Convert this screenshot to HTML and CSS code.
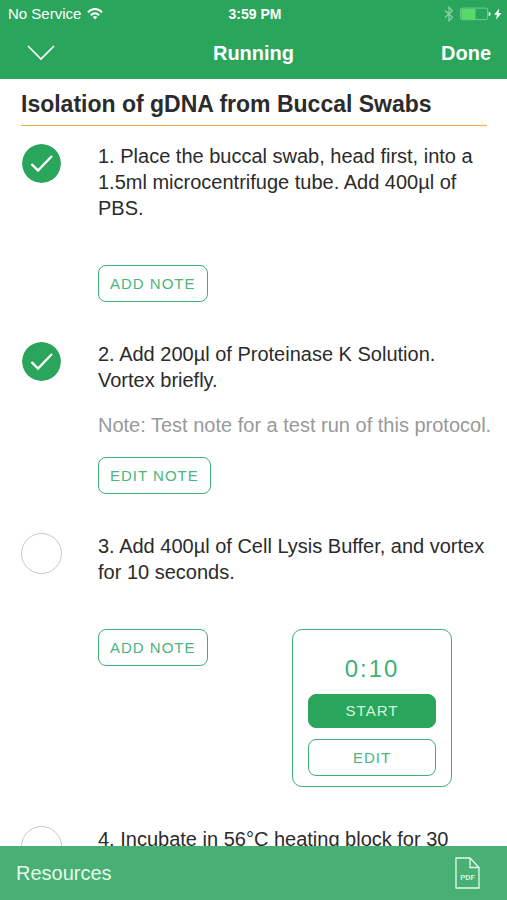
FILE: index.html
```html
<!DOCTYPE html>
<html lang="en">
<head>
<meta charset="utf-8">
<meta name="viewport" content="width=device-width, initial-scale=1">
<title>Running</title>
<link rel="stylesheet" href="styles.css">
</head>
<body>
<header class="header">
  <div class="status">
    <div class="status-left">
      <span>No Service</span>
      <svg width="16" height="12" viewBox="0 0 16 12" fill="none" stroke="#fff" stroke-width="2" aria-hidden="true">
        <path d="M1 4.400C5-.1 11-.1 15 4.400"/><path d="M3.800 7.200C6.300 4.500 9.700 4.500 12.200 7.200"/><path d="M8 11.500 5.700 9.100Q8 7 10.300 9.100Z" fill="#fff" stroke="none"/>
      </svg>
    </div>
    <span class="clock">3:59 PM</span>
    <div class="status-right">
      <svg width="10" height="16" viewBox="0 0 10 16" fill="none" stroke="#8fd0a9" stroke-width="1.200" aria-hidden="true">
        <path d="M1 4.500 8.500 11.200 5 14.800V1.200L8.500 4.800 1 11.500"/>
      </svg>
      <svg width="42" height="14" viewBox="0 0 42 14" aria-hidden="true">
        <rect x=".6" y="1.100" width="27" height="11.600" rx="1.800" fill="none" stroke="#7cc99b"/>
        <path d="M1.500 2H15.500V12H1.500Z" fill="#55dc68"/>
        <path d="M28.700 5Q30.600 5.200 30.600 7T28.700 9Z" fill="#fff"/>
        <path d="M39.200 1.500 34.200 7.800H37L35.900 12.700 41.500 6H38.500Z" fill="#fff"/>
      </svg>
    </div>
  </div>
  <nav class="nav">
    <button class="nav-collapse" type="button" aria-label="Collapse">
      <svg width="28" height="16" viewBox="0 0 28 16" fill="none" stroke="#fff" stroke-width="1.700"><path d="M1 1 14 14 27 1"/></svg>
    </button>
    <span class="nav-title">Running</span>
    <button class="nav-done" type="button">Done</button>
  </nav>
</header>

<main class="protocol">
  <h1 class="title">Isolation of gDNA from Buccal Swabs</h1>
  <ol class="steps">
    <li class="step">
      <span class="tick">
        <input class="tick-box" type="checkbox" id="step-1" checked>
        <svg class="tick-mark" viewBox="0 0 40 40" aria-hidden="true"><path d="M10.500 21 17 27.500 31 13"/></svg>
      </span>
      <div class="step-body">
        <label class="step-text" for="step-1">1. Place the buccal swab, head first, into a 1.5ml microcentrifuge tube. Add 400µl of PBS.</label>
        <div class="actions actions-far"><button class="btn" type="button">ADD NOTE</button></div>
      </div>
    </li>
    <li class="step">
      <span class="tick">
        <input class="tick-box" type="checkbox" id="step-2" checked>
        <svg class="tick-mark" viewBox="0 0 40 40" aria-hidden="true"><path d="M10.500 21 17 27.500 31 13"/></svg>
      </span>
      <div class="step-body">
        <label class="step-text" for="step-2">2. Add 200µl of Proteinase K Solution.<br>Vortex briefly.</label>
        <p class="note">Note: Test note for a test run of this protocol.</p>
        <div class="actions"><button class="btn" type="button">EDIT NOTE</button></div>
      </div>
    </li>
    <li class="step">
      <span class="tick"><input class="tick-box" type="checkbox" id="step-3"></span>
      <div class="step-body">
        <label class="step-text" for="step-3">3. Add 400µl of Cell Lysis Buffer, and vortex for 10 seconds.</label>
        <div class="actions actions-far">
          <button class="btn" type="button">ADD NOTE</button>
          <section class="timer" aria-label="Timer">
            <div class="timer-value">0:10</div>
            <button class="btn btn-solid" type="button">START</button>
            <button class="btn" type="button">EDIT</button>
          </section>
        </div>
      </div>
    </li>
    <li class="step">
      <span class="tick"><input class="tick-box" type="checkbox" id="step-4"></span>
      <div class="step-body">
        <label class="step-text" for="step-4">4. Incubate in 56°C heating block for 30</label>
      </div>
    </li>
  </ol>
</main>

<footer class="footer">
  <a class="footer-link" href="#resources">Resources</a>
  <button class="footer-pdf" type="button" aria-label="Open PDF">
    <svg width="25" height="32" viewBox="0 0 25 32" fill="none" stroke="#e4fbe9" stroke-width="1.300">
      <path d="M1 1H15L24 10.500V31H1Z"/><path d="M15 1V10.500H24"/>
      <text class="pdf-text" x="12.500" y="22.500" text-anchor="middle">PDF</text>
    </svg>
  </button>
</footer>
</body>
</html>
```
FILE: styles.css
```css
* {
  box-sizing: border-box;
}

:root {
  --green: #29a55c;
  --line: #40b075;
}

body {
  margin: 0;
  height: 100vh;
  display: flex;
  flex-direction: column;
  background: #fff;
  color: #2b2b2b;
  font-family: "Liberation Sans", Arial, sans-serif;
  font-size: 20px;
  line-height: 26px;
}

button {
  margin: 0;
  padding: 0;
  border: 0;
  background: none;
  color: inherit;
  font: inherit;
}

svg {
  display: block;
}

.header {
  flex: none;
  background: var(--green);
  color: #fff;
}

.status {
  display: grid;
  grid-template-columns: 1fr auto 1fr;
  align-items: center;
  height: 28px;
  padding: 0 5px 0 8px;
  font-size: 15px;
}

.status-left,
.status-right {
  display: flex;
  align-items: center;
  gap: 6px;
}

.status-right {
  justify-content: flex-end;
}

.clock {
  font-size: 14px;
  font-weight: bold;
}

.nav {
  display: grid;
  grid-template-columns: 1fr auto 1fr;
  align-items: center;
  height: 51px;
  padding: 0 16px 2px;
}

.nav-collapse {
  justify-self: start;
  padding-left: 11px;
}

.nav-title,
.nav-done {
  font-weight: bold;
}

.nav-done {
  justify-self: end;
}

.protocol {
  flex: 1;
  min-height: 0;
  overflow: hidden;
  padding: 12px 20px 0 21px;
}

.title {
  margin: 0;
  padding-bottom: 8px;
  border-bottom: 1px solid #f0b23c;
  font-size: 23px;
  line-height: 26px;
}

.steps {
  margin: 0;
  padding: 17px 0 0;
  list-style: none;
  display: grid;
  grid-template-columns: minmax(0, 1fr);
  gap: 39px;
}

.step {
  display: grid;
  grid-template-columns: 41px minmax(0, 1fr);
  column-gap: 36px;
  align-items: start;
}

.tick {
  display: grid;
}

.tick > * {
  grid-area: 1 / 1;
}

.tick-box {
  appearance: none;
  width: 41px;
  height: 41px;
  margin: 0;
  border: 1px solid #c8c8c8;
  border-radius: 50%;
}

.tick-box:checked {
  border-color: #fff;
  background: var(--green);
  background-clip: padding-box;
}

.tick-mark {
  width: 40px;
  height: 40px;
  fill: none;
  stroke: #fff;
  stroke-width: 2.4;
  pointer-events: none;
}

.step-text {
  display: block;
}

.note {
  margin: 19px 0 0;
  color: #999;
  white-space: nowrap;
}

.actions {
  display: flex;
  justify-content: space-between;
  align-items: flex-start;
  margin-top: 19px;
  padding-right: 35px;
}

.actions-far {
  margin-top: 44px;
}

.btn {
  height: 37px;
  padding: 0 11px;
  border: 1px solid var(--line);
  border-radius: 8px;
  color: #4cb57d;
  font-size: 15px;
  letter-spacing: 1px;
}

.btn-solid {
  height: 34px;
  border-color: var(--green);
  background: var(--green);
  color: #d3f5df;
}

.timer {
  display: flex;
  flex-direction: column;
  gap: 11px;
  width: 160px;
  padding: 26px 15px 10px;
  border: 1px solid var(--line);
  border-radius: 10px;
}

.timer-value {
  padding-bottom: 1px;
  color: var(--line);
  font-size: 24px;
  letter-spacing: 2px;
  text-align: center;
}

.footer {
  flex: none;
  display: flex;
  justify-content: space-between;
  align-items: center;
  height: 54px;
  padding: 0 27px 0 16px;
  background: #48b074;
  color: #e4fbe9;
}

.footer-link {
  color: inherit;
  text-decoration: none;
}

.pdf-text {
  fill: #e4fbe9;
  stroke: none;
  font-family: Roboto, "Liberation Sans", sans-serif;
  font-size: 8px;
  font-weight: 500;
}
```
